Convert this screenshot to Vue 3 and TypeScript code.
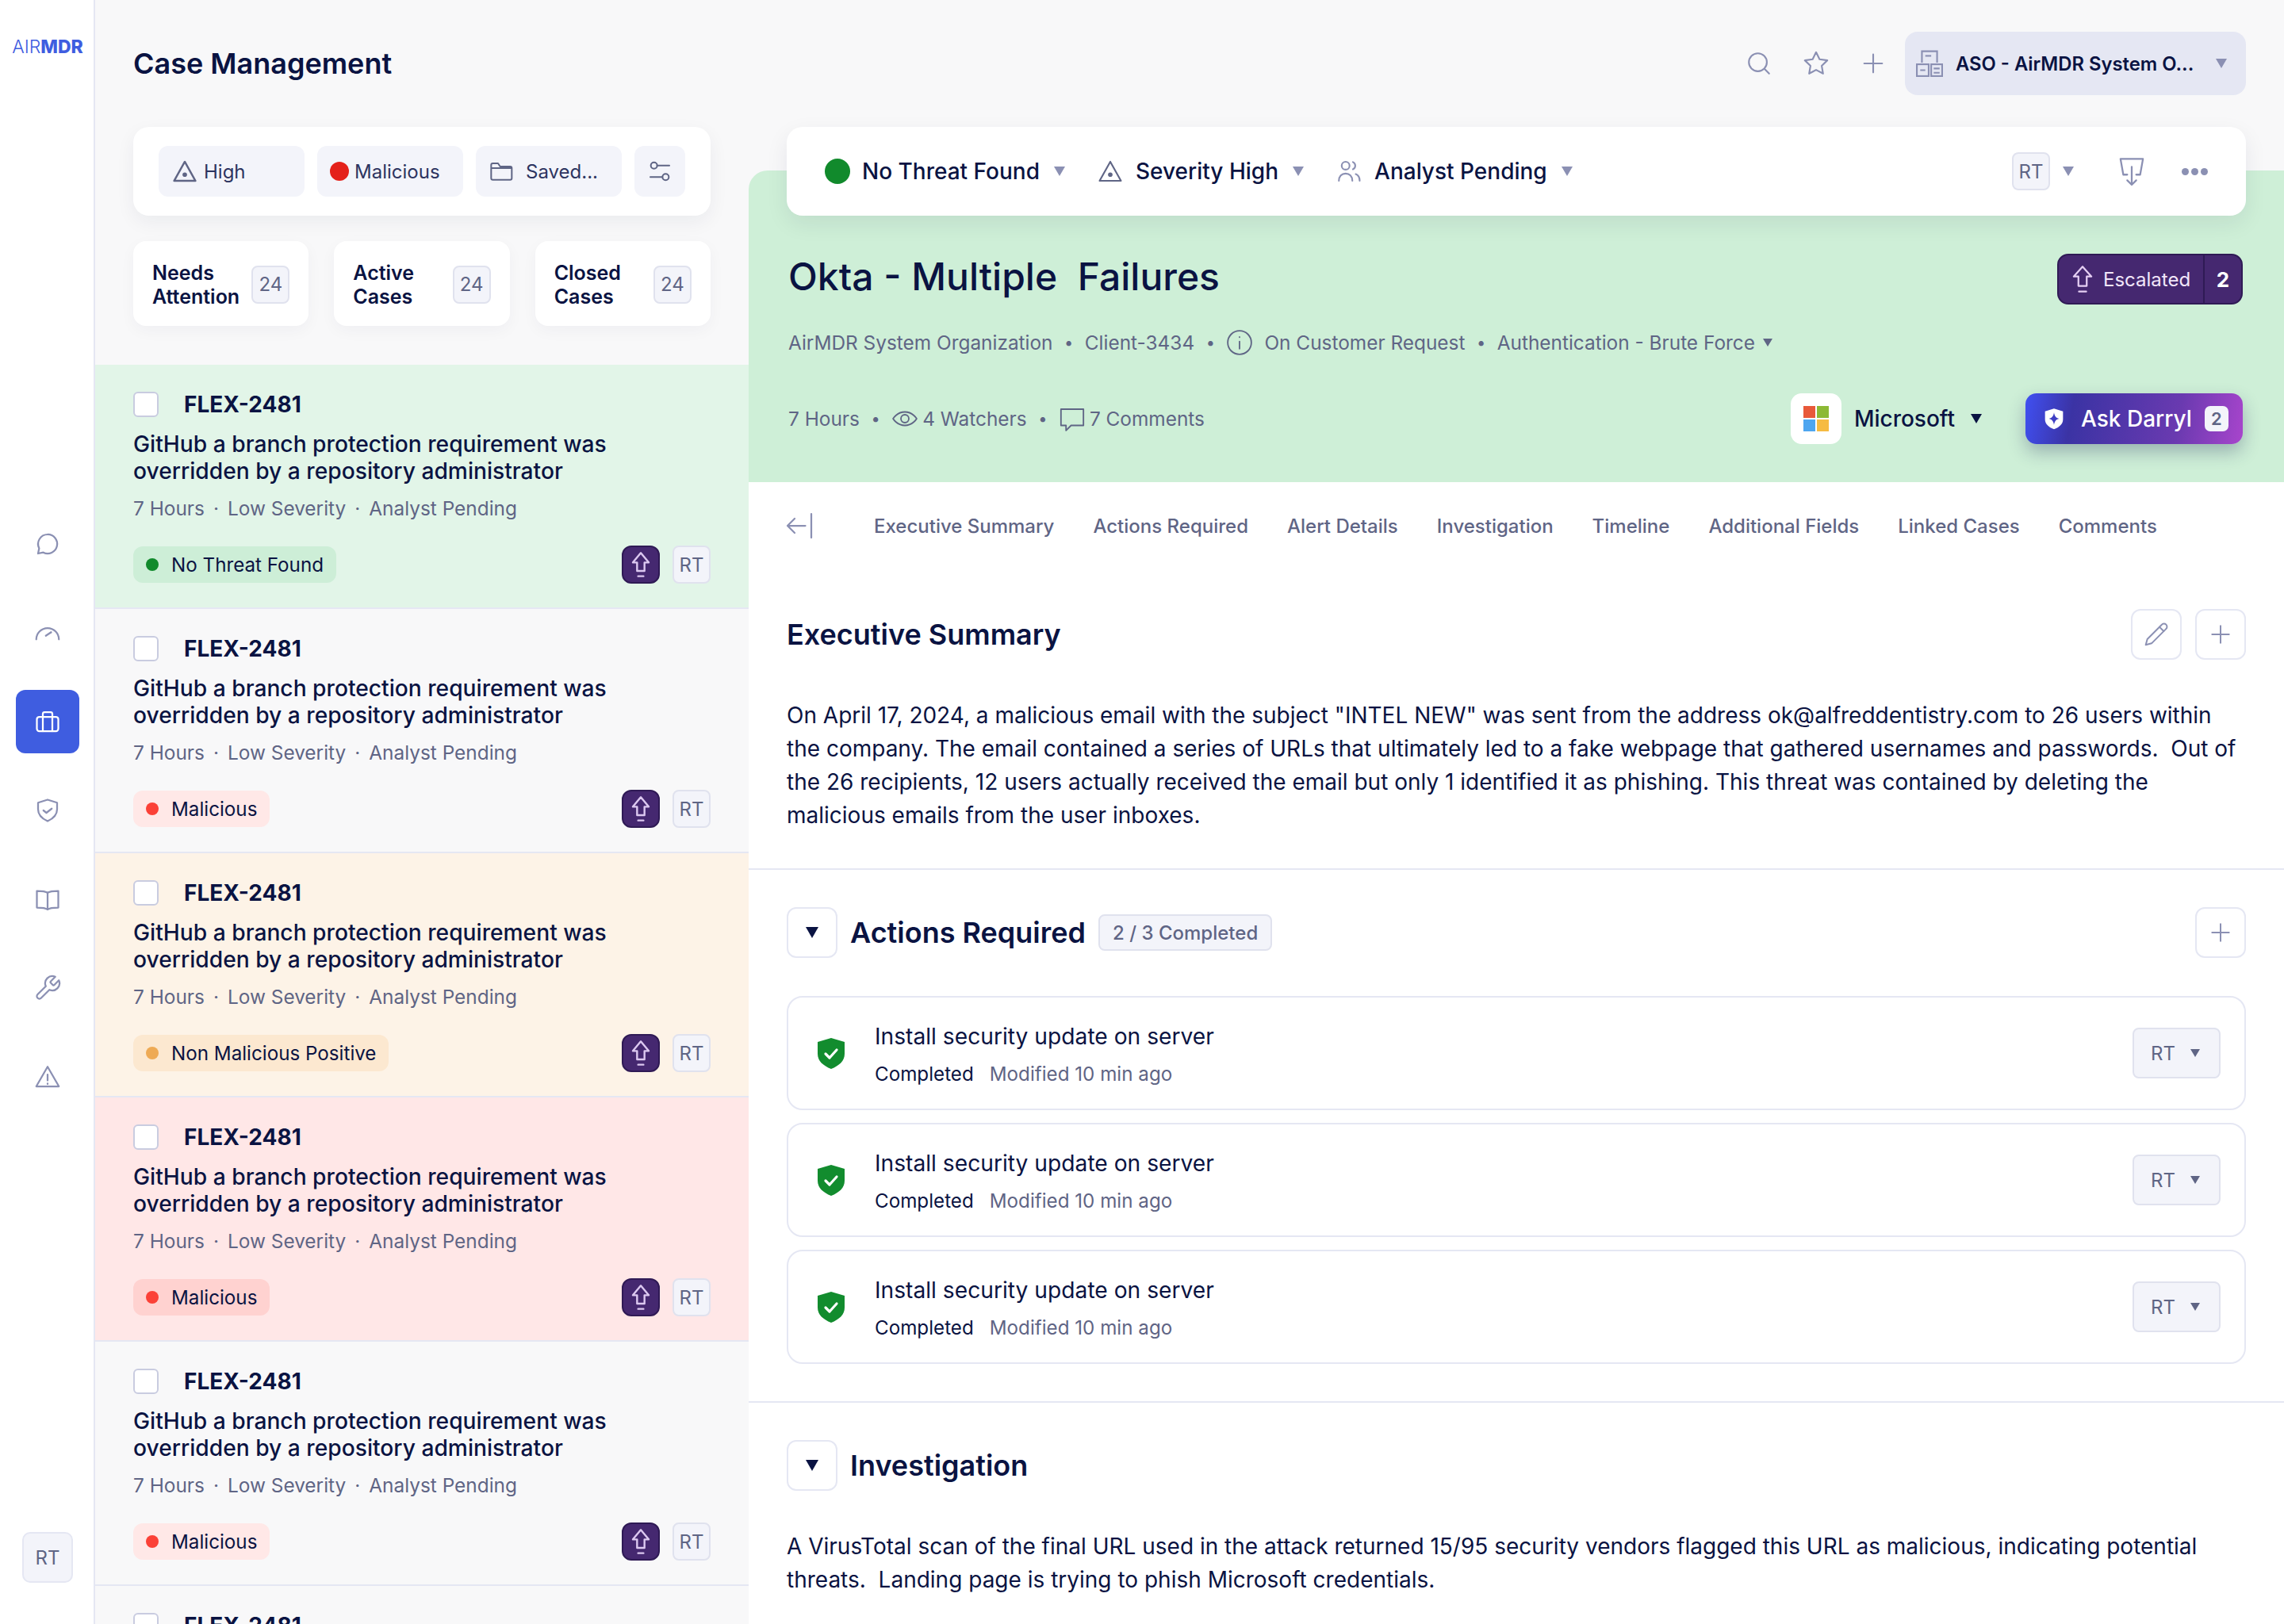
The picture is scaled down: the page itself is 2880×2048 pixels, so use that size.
<script setup lang="ts">
interface CaseRow {
  tint: string
  dot: string
  chipBg: string
  status: string
}

const navItems: string[][] = [
  ['M12 4a8 8 0 1 1-3.600 15.100L4 20l.9-4.400A8 8 0 0 1 12 4z'],
  ['M2.500 17.500a9.500 9.500 0 0 1 19 0', 'M10.500 14.500l4.500-3'],
  ['M5 8h14a2 2 0 0 1 2 2v8a2 2 0 0 1-2 2H5a2 2 0 0 1-2-2v-8a2 2 0 0 1 2-2z', 'M8 8V5.500A1.500 1.500 0 0 1 9.500 4h5A1.500 1.500 0 0 1 16 5.500V8', 'M8 8v12', 'M16 8v12'],
  ['M12 3l8 2.500V11c0 5-3.500 8-8 10-4.500-2-8-5-8-10V5.500z', 'M8.500 12l2.500 2 4.500-3.500'],
  ['M12 6.500C10 5 7 5 3 5v14c4 0 7 0 9 1.500 2-1.500 5-1.500 9-1.500V5c-4 0-7 0-9 1.500z', 'M12 6.500v14'],
  ['M14.700 6.300a1 1 0 0 0 0 1.400l1.600 1.600a1 1 0 0 0 1.400 0l3.770-3.770a6 6 0 0 1-7.940 7.940l-6.910 6.910a2.120 2.120 0 0 1-3-3l6.910-6.910a6 6 0 0 1 7.940-7.940l-3.760 3.760z'],
  ['M12 3.500L2.500 20h19z', 'M12 10v5', 'M12 17.500v.5']
]

const stats = [
  { first: 'Needs', second: 'Attention' },
  { first: 'Active', second: 'Cases' },
  { first: 'Closed', second: 'Cases' }
]

const green = { tint: '#e2f5e8', dot: '#118a2c', chipBg: '#cdeed7', status: 'No Threat Found' }
const plain = { tint: '#f8f8f9', dot: '#fb4137', chipBg: '#ffe8e7', status: 'Malicious' }
const orange = { tint: '#fdf3e7', dot: '#eeaa55', chipBg: '#fce8d0', status: 'Non Malicious Positive' }
const red = { tint: '#ffe7e7', dot: '#fb4137', chipBg: '#ffd2d0', status: 'Malicious' }
const cases: CaseRow[] = [green, plain, orange, red, plain, plain]

const tabs = ['Executive Summary', 'Actions Required', 'Alert Details', 'Investigation', 'Timeline', 'Additional Fields', 'Linked Cases', 'Comments']
const tasks = [1, 2, 3]
</script>

<template>
  <div class="app">
    <aside class="sidebar">
      <div class="logo"><span class="logo-air">AIR</span><span class="logo-mdr">MDR</span></div>
      <nav class="nav">
        <div v-for="(paths, i) in navItems" :key="i" class="nav-item" :class="{ active: i === 2 }">
          <svg width="36" height="36" viewBox="0 0 24 24" fill="none" stroke="currentColor" stroke-width="1.500" stroke-linecap="round" stroke-linejoin="round">
            <path v-for="d in paths" :key="d" :d="d" />
          </svg>
        </div>
      </nav>
      <div class="side-user">RT</div>
    </aside>

    <div class="main">
      <header class="topbar">
        <h1 class="page-title">Case Management</h1>
        <div class="top-actions">
          <div class="top-icons">
            <svg width="34" height="34" viewBox="0 0 24 24" fill="none" stroke="currentColor" stroke-width="1.500" stroke-linecap="round">
              <circle cx="11" cy="11" r="8" /><path d="M17 17l4 4" />
            </svg>
            <svg width="34" height="34" viewBox="0 0 24 24" fill="none" stroke="currentColor" stroke-width="1.500" stroke-linejoin="round">
              <polygon points="12 2 15.090 8.260 22 9.270 17 14.140 18.180 21.020 12 17.770 5.820 21.020 7 14.140 2 9.270 8.910 8.260" />
            </svg>
            <svg width="34" height="34" viewBox="0 0 24 24" fill="none" stroke="currentColor" stroke-width="1.500" stroke-linecap="round">
              <path d="M12 4v16M4 12h16" />
            </svg>
          </div>
          <div class="org-pill">
            <svg width="34" height="34" viewBox="0 0 32 32" fill="none" stroke="#8b90b3" stroke-width="2">
              <path d="M7 15V1.500h18V15" /><path d="M11 7h7" /><rect x="1" y="17" width="14" height="14" /><rect x="18" y="17" width="13" height="14" /><path d="M5 24h6M21 22h7M21 27h7" />
            </svg>
            <span class="org-name">ASO - AirMDR System O...</span>
            <i class="caret caret-muted"></i>
          </div>
        </div>
      </header>

      <div class="content">
        <section class="left">
          <div class="filters">
            <div class="filter-chip">
              <svg width="34" height="34" viewBox="0 0 24 24" fill="none" stroke="#5f6585" stroke-width="1.700" stroke-linejoin="round">
                <path d="M12 3.500 2.500 20.500h19z" /><circle cx="12" cy="15" r="2" fill="#5f6585" stroke="none" />
              </svg>
              <span>High</span>
            </div>
            <div class="filter-chip">
              <i class="filter-dot"></i>
              <span>Malicious</span>
            </div>
            <div class="filter-chip saved">
              <svg width="32" height="32" viewBox="0 0 24 24" fill="none" stroke="#5f6585" stroke-width="1.500" stroke-linejoin="round">
                <path d="M2.500 6A1.500 1.500 0 0 1 4 4.500h5l2 3h9.500A1.500 1.500 0 0 1 22 9v9.500a1.500 1.500 0 0 1-1.500 1.500H4a1.500 1.500 0 0 1-1.500-1.500z" /><path d="M2.500 9H22" />
              </svg>
              <span>Saved...</span>
            </div>
            <div class="filter-btn">
              <svg width="32" height="32" viewBox="0 0 24 24" fill="none" stroke="#5f6585" stroke-width="1.500" stroke-linecap="round">
                <circle cx="6.500" cy="6.500" r="3" /><path d="M9.500 6.500H21" /><circle cx="17.500" cy="17.500" r="3" /><path d="M3 17.500h11.500" />
              </svg>
            </div>
          </div>

          <div class="stats">
            <div v-for="s in stats" :key="s.first" class="stat-card">
              <div class="stat-label">{{ s.first }}<br />{{ s.second }}</div>
              <div class="stat-count">24</div>
            </div>
          </div>

          <div class="case-list">
            <article v-for="(c, i) in cases" :key="i" class="case-row" :style="{ background: c.tint }">
              <div class="case-head">
                <span class="checkbox"></span>
                <span class="case-id">FLEX-2481</span>
              </div>
              <template v-if="i < 5">
                <p class="case-title">GitHub a branch protection requirement was overridden by a repository administrator</p>
                <div class="case-meta">7 Hours<em>·</em>Low Severity<em>·</em>Analyst Pending</div>
                <div class="case-foot">
                  <div class="status-chip" :style="{ background: c.chipBg }">
                    <i class="status-dot" :style="{ background: c.dot }"></i>
                    <span>{{ c.status }}</span>
                  </div>
                  <div class="foot-badges">
                    <div class="esc-badge">
                      <svg width="32" height="36" viewBox="0 0 24 27" fill="none" stroke="#dcc8f0" stroke-width="1.800" stroke-linejoin="round" stroke-linecap="round">
                        <path d="M12 2.500 4.500 11.500H8.500V19.500H15.500V11.500H19.500Z" /><path d="M9.500 24.500h5" />
                      </svg>
                    </div>
                    <div class="rt-badge">RT</div>
                  </div>
                </div>
              </template>
            </article>
          </div>
        </section>

        <section class="right">
          <div class="hero">
            <div class="toolbar">
              <div class="tool-group">
                <i class="tool-dot"></i>
                <span class="tool-text">No Threat Found</span>
                <i class="caret caret-muted"></i>
              </div>
              <div class="tool-group">
                <svg width="34" height="34" viewBox="0 0 24 24" fill="none" stroke="#5f6585" stroke-width="1.500" stroke-linejoin="round">
                  <path d="M12 3.500 2.500 20.500h19z" /><circle cx="12" cy="15" r="2" fill="#5f6585" stroke="none" />
                </svg>
                <span class="tool-text">Severity High</span>
                <i class="caret caret-muted"></i>
              </div>
              <div class="tool-group">
                <svg width="34" height="34" viewBox="0 0 24 24" fill="none" stroke="#8b90b3" stroke-width="1.500" stroke-linecap="round">
                  <circle cx="9" cy="7" r="3.500" /><path d="M3 20.500c0-4 2.500-6.500 6-6.500s6 2.500 6 6.500" /><path d="M15.500 3.800a3.500 3.500 0 0 1 0 6.400" /><path d="M18 14.500c2 .8 3.500 3 3.500 6" />
                </svg>
                <span class="tool-text">Analyst Pending</span>
                <i class="caret caret-muted"></i>
              </div>
              <div class="tool-right">
                <div class="rt-badge tall">RT</div>
                <i class="caret caret-muted"></i>
                <svg class="tray" width="34" height="40" viewBox="0 0 24 28" fill="none" stroke="#8b90b3" stroke-width="1.600" stroke-linecap="round" stroke-linejoin="round">
                  <path d="M8 17H4.500L2 3h20l-2.500 14H16" /><path d="M12 10v16M8 22l4 4 4-4" />
                </svg>
                <div class="more"><i></i><i></i><i></i></div>
              </div>
            </div>

            <div class="hero-title-row">
              <h2 class="case-name">Okta - Multiple&nbsp; Failures</h2>
              <div class="esc-pill">
                <div class="esc-label">
                  <svg width="32" height="38" viewBox="0 0 24 29" fill="none" stroke="#e5cff3" stroke-width="1.700" stroke-linejoin="round" stroke-linecap="round">
                    <path d="M12 2.500 3.500 12H8V21H16V12H20.500Z" /><path d="M8.500 26.500h7" />
                  </svg>
                  <span>Escalated</span>
                </div>
                <div class="esc-num">2</div>
              </div>
            </div>

            <div class="hero-meta">
              <span>AirMDR System Organization</span><em>•</em>
              <span>Client-3434</span><em>•</em>
              <svg width="34" height="34" viewBox="0 0 24 24" fill="none" stroke="#5f6585" stroke-width="1.300" stroke-linecap="round">
                <circle cx="12" cy="12" r="10.500" /><path d="M12 11v6.500M12 7v.3" />
              </svg>
              <span class="gap-left">On Customer Request</span><em>•</em>
              <span>Authentication - Brute Force</span>
              <i class="caret caret-small"></i>
            </div>

            <div class="hero-bottom">
              <div class="hero-meta">
                <span>7 Hours</span><em>•</em>
                <svg width="34" height="34" viewBox="0 0 24 24" fill="none" stroke="#5f6585" stroke-width="1.300" stroke-linejoin="round">
                  <path d="M1.500 12S5 6 12 6s10.500 6 10.500 6S19 18 12 18 1.500 12 1.500 12z" /><circle cx="12" cy="12" r="3.500" />
                </svg>
                <span class="tight">4 Watchers</span><em>•</em>
                <svg width="34" height="34" viewBox="0 0 24 24" fill="none" stroke="#5f6585" stroke-width="1.300" stroke-linejoin="round">
                  <path d="M2 3.500h20v14.500H11l-4.500 4.500V18H2z" />
                </svg>
                <span class="tight">7 Comments</span>
              </div>
              <div class="hero-actions">
                <div class="vendor">
                  <div class="vendor-tile">
                    <div class="ms-logo"><i></i><i></i><i></i><i></i></div>
                  </div>
                  <span class="vendor-name">Microsoft</span>
                  <i class="caret caret-dark"></i>
                </div>
                <div class="ask-btn">
                  <svg width="24" height="28" viewBox="0 0 18 20">
                    <path d="M9 .5 17.500 3v7.500c0 4.500-3.500 7.500-8.500 9.500C4 18 .5 15 .5 10.500V3z" fill="#fff" />
                    <path d="M9 4c.5 3.500 1.700 5.100 4.800 6-3.100.9-4.300 2.500-4.800 6-.5-3.500-1.700-5.100-4.800-6 3.100-.9 4.300-2.500 4.800-6z" fill="#3f3fc4" />
                  </svg>
                  <span>Ask Darryl</span>
                  <div class="ask-count">2</div>
                </div>
              </div>
            </div>
          </div>

          <div class="tabs">
            <svg class="back" width="36" height="36" viewBox="0 0 24 24" fill="none" stroke="#8b90b3" stroke-width="1.500" stroke-linecap="round" stroke-linejoin="round">
              <path d="M22 2v20" /><path d="M2 12h15M8 6l-6 6 6 6" />
            </svg>
            <span v-for="t in tabs" :key="t" class="tab">{{ t }}</span>
          </div>

          <div class="section summary">
            <div class="section-head">
              <h3 class="section-title">Executive Summary</h3>
              <div class="head-btns">
                <div class="square-btn">
                  <svg width="32" height="32" viewBox="0 0 24 24" fill="none" stroke="#8b90b3" stroke-width="1.500" stroke-linecap="round" stroke-linejoin="round">
                    <path d="M17 3a2.850 2.850 0 1 1 4 4L7.500 20.500 2 22l1.500-5.500z" /><path d="M15 5l4 4" />
                  </svg>
                </div>
                <div class="square-btn">
                  <svg width="32" height="32" viewBox="0 0 24 24" fill="none" stroke="#8b90b3" stroke-width="1.500" stroke-linecap="round"><path d="M12 4v16M4 12h16" /></svg>
                </div>
              </div>
            </div>
            <p class="body-text">On April 17, 2024, a malicious email with the subject "INTEL NEW" was sent from the address ok@alfreddentistry.com to 26 users within the company. The email contained a series of URLs that ultimately led to a fake webpage that gathered usernames and passwords.&nbsp; Out of the 26 recipients, 12 users actually received the email but only 1 identified it as phishing. This threat was contained by deleting the malicious emails from the user inboxes.</p>
          </div>

          <div class="section actions">
            <div class="section-head">
              <div class="head-left">
                <div class="square-btn"><i class="caret caret-dark big"></i></div>
                <h3 class="section-title">Actions Required</h3>
                <span class="progress">2 / 3 Completed</span>
              </div>
              <div class="square-btn">
                <svg width="32" height="32" viewBox="0 0 24 24" fill="none" stroke="#8b90b3" stroke-width="1.500" stroke-linecap="round"><path d="M12 4v16M4 12h16" /></svg>
              </div>
            </div>
            <div class="task-list">
              <div v-for="t in tasks" :key="t" class="task-card">
                <svg class="task-shield" width="36" height="40" viewBox="0 0 18 20">
                  <path d="M9 .5 17.500 3v7.500c0 4.500-3.500 7.500-8.500 9.500C4 18 .5 15 .5 10.500V3z" fill="#128c2e" />
                  <path d="M5.500 10.500l2.500 2.500 4.500-5" fill="none" stroke="#fff" stroke-width="1.600" stroke-linecap="round" stroke-linejoin="round" />
                </svg>
                <div class="task-body">
                  <div class="task-title">Install security update on server</div>
                  <div class="task-sub"><b>Completed</b><span>Modified 10 min ago</span></div>
                </div>
                <div class="assignee">
                  <span>RT</span>
                  <i class="caret caret-muted-dark"></i>
                </div>
              </div>
            </div>
          </div>

          <div class="section investigation">
            <div class="section-head">
              <div class="head-left">
                <div class="square-btn"><i class="caret caret-dark big"></i></div>
                <h3 class="section-title">Investigation</h3>
              </div>
            </div>
            <p class="body-text">A VirusTotal scan of the final URL used in the attack returned 15/95 security vendors flagged this URL as malicious, indicating potential threats.&nbsp; Landing page is trying to phish Microsoft credentials.</p>
          </div>
        </section>
      </div>
    </div>
  </div>
</template>

<style scoped>
.app {
  display: flex;
  width: 2880px;
  height: 2048px;
  overflow: hidden;
  background: #f8f8f9;
  font-family: Inter, "Liberation Sans", sans-serif;
  color: #0a1342;
}

.sidebar {
  width: 120px;
  flex-shrink: 0;
  box-sizing: border-box;
  padding-left: 2px;
  background: #fff;
  border-right: 2px solid #e5e7f3;
  display: flex;
  flex-direction: column;
  align-items: center;
}

.logo {
  margin-top: 46px;
  font-size: 23px;
  line-height: 26px;
  color: #3f5de0;
  white-space: nowrap;
}

.logo-air {
  font-weight: 300;
}

.logo-mdr {
  font-weight: 800;
}

.nav {
  margin-top: 574px;
  display: flex;
  flex-direction: column;
  gap: 32px;
}

.nav-item {
  width: 80px;
  height: 80px;
  border-radius: 12px;
  display: flex;
  align-items: center;
  justify-content: center;
  color: #8b90b3;
}

.nav-item.active {
  background: #3f5de0;
  color: #fff;
}

.side-user {
  margin-top: auto;
  margin-bottom: 52px;
  width: 64px;
  height: 64px;
  box-sizing: border-box;
  border: 2px solid #e5e7f3;
  border-radius: 10px;
  background: #f3f4fa;
  color: #5f6585;
  font-size: 24px;
  display: flex;
  align-items: center;
  justify-content: center;
}

.main {
  flex: 1;
  min-width: 0;
  display: flex;
  flex-direction: column;
}

.topbar {
  height: 160px;
  flex-shrink: 0;
  box-sizing: border-box;
  padding: 0 48px;
  display: flex;
  align-items: center;
  justify-content: space-between;
}

.page-title {
  margin: 0;
  font-size: 36px;
  font-weight: 600;
  line-height: 44px;
}

.top-actions {
  display: flex;
  align-items: center;
  gap: 23px;
}

.top-icons {
  display: flex;
  align-items: center;
  gap: 38px;
  color: #8b90b3;
}

.org-pill {
  width: 430px;
  height: 80px;
  box-sizing: border-box;
  padding: 0 24px 0 14px;
  background: #e5e7f3;
  border-radius: 16px;
  display: flex;
  align-items: center;
  gap: 16px;
}

.org-name {
  flex: 1;
  font-size: 23.800px;
  font-weight: 600;
  white-space: nowrap;
}

.caret {
  display: inline-block;
  width: 0;
  height: 0;
  border-left: 7px solid transparent;
  border-right: 7px solid transparent;
  border-top: 12px solid #8b90b3;
  flex-shrink: 0;
}

.caret-muted-dark {
  border-top-color: #5f6585;
  border-left-width: 6px;
  border-right-width: 6px;
  border-top-width: 10px;
}

.caret-small {
  border-top-color: #5f6585;
  border-left-width: 6px;
  border-right-width: 6px;
  border-top-width: 10px;
  margin-left: 10px;
}

.caret-dark {
  border-top-color: #0a1342;
}

.caret-dark.big {
  border-left-width: 8px;
  border-right-width: 8px;
  border-top-width: 14px;
}

.content {
  flex: 1;
  min-height: 0;
  display: flex;
}

.left {
  width: 824px;
  flex-shrink: 0;
  display: flex;
  flex-direction: column;
  min-height: 0;
}

.filters {
  margin: 0 48px;
  height: 112px;
  box-sizing: border-box;
  padding: 24px 32px;
  background: #fff;
  border-radius: 20px;
  box-shadow: 0 8px 24px rgba(20, 26, 70, 0.06);
  display: flex;
  gap: 16px;
}

.filter-chip {
  width: 184px;
  height: 64px;
  box-sizing: border-box;
  padding-left: 16px;
  background: #f3f4fa;
  border-radius: 12px;
  display: flex;
  align-items: center;
  gap: 7px;
  font-size: 24px;
  color: #2d3460;
}

.filter-chip.saved {
  gap: 15px;
}

.filter-dot {
  width: 24px;
  height: 24px;
  border-radius: 50%;
  background: #e4211a;
}

.filter-btn {
  width: 64px;
  height: 64px;
  background: #f3f4fa;
  border-radius: 12px;
  display: flex;
  align-items: center;
  justify-content: center;
}

.stats {
  margin: 32px 48px 49px;
  display: grid;
  grid-template-columns: repeat(3, 1fr);
  gap: 32px;
}

.stat-card {
  height: 107px;
  box-sizing: border-box;
  padding: 2px 24px 0;
  background: #fff;
  border-radius: 16px;
  box-shadow: 0 6px 20px rgba(20, 26, 70, 0.04);
  display: flex;
  align-items: center;
  justify-content: space-between;
}

.stat-label {
  font-size: 25px;
  line-height: 30px;
  font-weight: 600;
}

.stat-count,
.rt-badge {
  width: 48px;
  height: 48px;
  box-sizing: border-box;
  border: 2px solid #e0e2ee;
  border-radius: 8px;
  background: #f3f4fa;
  color: #5f6585;
  font-size: 24px;
  display: flex;
  align-items: center;
  justify-content: center;
}

.case-list {
  flex: 1;
  min-height: 0;
  overflow: hidden;
}

.case-row {
  box-sizing: border-box;
  height: 308px;
  padding: 33px 48px 0;
  border-bottom: 2px solid #e5e7f3;
}

.case-head {
  height: 34px;
  display: flex;
  align-items: center;
  gap: 32px;
}

.checkbox {
  width: 32px;
  height: 32px;
  box-sizing: border-box;
  background: #fff;
  border: 2px solid #c9cce0;
  border-radius: 6px;
}

.case-id {
  font-size: 28px;
  font-weight: 700;
  line-height: 34px;
}

.case-title {
  margin: 16px 0 0;
  font-size: 28.200px;
  line-height: 34px;
  font-weight: 500;
  width: 640px;
}

.case-meta {
  margin-top: 16px;
  font-size: 24.400px;
  line-height: 28px;
  color: #5f6585;
}

.case-meta em {
  font-style: normal;
  margin: 0 11px;
}

.case-foot {
  margin-top: 33px;
  display: flex;
  align-items: center;
  justify-content: space-between;
}

.status-chip {
  height: 46px;
  box-sizing: border-box;
  padding: 0 16px;
  border-radius: 12px;
  display: flex;
  align-items: center;
  gap: 16px;
  font-size: 24.200px;
}

.status-dot {
  width: 16px;
  height: 16px;
  border-radius: 50%;
}

.foot-badges {
  display: flex;
  gap: 16px;
}

.esc-badge {
  width: 48px;
  height: 48px;
  box-sizing: border-box;
  background: #452870;
  border: 2px solid #2f1a55;
  border-radius: 12px;
  display: flex;
  align-items: center;
  justify-content: center;
}

.right {
  flex: 1;
  min-width: 0;
  padding-top: 55px;
  display: flex;
  flex-direction: column;
}

.hero {
  background: #ceefd7;
  border-top-left-radius: 24px;
  padding: 0 48px 48px;
  flex-shrink: 0;
}

.toolbar {
  margin-top: -55px;
  height: 112px;
  box-sizing: border-box;
  padding: 0 48px;
  background: #fff;
  border-radius: 20px;
  box-shadow: 0 10px 28px rgba(20, 26, 70, 0.08);
  display: flex;
  align-items: center;
  gap: 40px;
}

.tool-group {
  display: flex;
  align-items: center;
  gap: 15px;
}

.tool-group .caret {
  margin-left: 3px;
}

.tool-dot {
  width: 32px;
  height: 32px;
  border-radius: 50%;
  background: #118a2c;
}

.tool-text {
  font-size: 28px;
  font-weight: 500;
}

.tool-right {
  margin-left: auto;
  display: flex;
  align-items: center;
  gap: 16px;
}

.tray {
  margin-left: 40px;
}

.more {
  margin-left: 30px;
  display: flex;
  gap: 3px;
}

.more i {
  width: 9px;
  height: 9px;
  border-radius: 50%;
  background: #8b90b3;
}

.hero-title-row {
  margin-top: 48px;
  padding: 0 4px 0 2px;
  height: 64px;
  display: flex;
  align-items: center;
  justify-content: space-between;
}

.case-name {
  margin: -6px 0 0;
  font-size: 48px;
  font-weight: 500;
  line-height: 58px;
}

.esc-pill {
  height: 64px;
  width: 234px;
  box-sizing: border-box;
  background: #452870;
  border: 2px solid #2f1a55;
  border-radius: 14px;
  display: flex;
  color: #f1e6f9;
  font-size: 24px;
}

.esc-label {
  width: 184px;
  box-sizing: border-box;
  padding-left: 14px;
  display: flex;
  align-items: center;
  gap: 10px;
  border-right: 2px solid #2f1a55;
}

.esc-num {
  flex: 1;
  display: flex;
  align-items: center;
  justify-content: center;
  color: #fff;
  font-weight: 700;
  font-size: 26px;
}

.hero-meta {
  margin-top: 32px;
  padding-left: 2px;
  height: 32px;
  display: flex;
  align-items: center;
  font-size: 24.400px;
  color: #5f6585;
  white-space: nowrap;
}

.hero-meta em {
  font-style: normal;
  margin: 0 14.500px;
  font-size: 20px;
}

.gap-left {
  margin-left: 14px;
}

.tight {
  margin-left: 5px;
}

.hero-bottom {
  margin-top: 48px;
  height: 64px;
  padding-right: 4px;
  display: flex;
  align-items: center;
  justify-content: space-between;
}

.hero-bottom .hero-meta {
  margin-top: 0;
}

.hero-actions {
  display: flex;
  align-items: center;
  gap: 55px;
}

.vendor {
  display: flex;
  align-items: center;
  gap: 16px;
}

.vendor-tile {
  width: 64px;
  height: 64px;
  background: #fff;
  border-radius: 14px;
  display: flex;
  align-items: center;
  justify-content: center;
}

.ms-logo {
  display: grid;
  grid-template-columns: repeat(2, 15px);
  grid-template-rows: repeat(2, 15px);
  gap: 2px;
}

.ms-logo i:nth-child(1) {
  background: #e8593a;
}

.ms-logo i:nth-child(2) {
  background: #8cb935;
}

.ms-logo i:nth-child(3) {
  background: #4ea6f0;
}

.ms-logo i:nth-child(4) {
  background: #f6bb42;
}

.vendor-name {
  font-size: 28px;
  font-weight: 500;
  margin-right: 4px;
}

.ask-btn {
  width: 274px;
  height: 64px;
  box-sizing: border-box;
  padding-left: 24px;
  border-radius: 14px;
  background: linear-gradient(100deg, #4050f2 0%, #3b33a4 22%, #6a3ab0 70%, #a845cc 100%);
  box-shadow: 0 10px 22px rgba(30, 40, 90, 0.3);
  color: #fff;
  font-size: 28px;
  font-weight: 500;
  display: flex;
  align-items: center;
  gap: 22px;
}

.ask-count {
  width: 30px;
  height: 32px;
  margin-left: -6px;
  background: #f3f4fa;
  border-radius: 7px;
  color: #5f6585;
  font-size: 22px;
  font-weight: 600;
  display: flex;
  align-items: center;
  justify-content: center;
}

.right > .tabs,
.section {
  background: #fff;
}

.tabs {
  height: 110px;
  flex-shrink: 0;
  box-sizing: border-box;
  padding: 0 48px;
  display: flex;
  align-items: center;
  gap: 49px;
}

.back {
  margin: 0 27px 0 -2px;
}

.tab {
  font-size: 24px;
  font-weight: 500;
  color: #5f6585;
  white-space: nowrap;
}

.section {
  flex-shrink: 0;
  padding: 47px 48px;
  border-bottom: 2px solid #e5e7f3;
}

.summary {
  padding-top: 50px;
  padding-bottom: 46px;
}

.investigation {
  flex: 1;
  border-bottom: none;
}

.section-head {
  height: 64px;
  display: flex;
  align-items: center;
  justify-content: space-between;
}

.head-left {
  display: flex;
  align-items: center;
  gap: 16px;
}

.head-btns {
  display: flex;
  gap: 17px;
}

.section-title {
  margin: 0;
  font-size: 36px;
  font-weight: 600;
  line-height: 44px;
}

.square-btn {
  width: 64px;
  height: 64px;
  box-sizing: border-box;
  background: #fff;
  border: 2px solid #e5e7f3;
  border-radius: 12px;
  display: flex;
  align-items: center;
  justify-content: center;
}

.progress {
  height: 46px;
  box-sizing: border-box;
  padding: 0 16px;
  background: #f3f4fa;
  border: 2px solid #e0e2ee;
  border-radius: 8px;
  color: #5f6585;
  font-size: 24px;
  font-weight: 500;
  display: flex;
  align-items: center;
}

.body-text {
  margin: 49px 0 0;
  font-size: 28px;
  line-height: 42px;
}

.task-list {
  margin-top: 48px;
  display: flex;
  flex-direction: column;
  gap: 16px;
}

.task-card {
  height: 144px;
  box-sizing: border-box;
  padding: 0 30px 0 36px;
  border: 2px solid #e5e7f3;
  border-radius: 20px;
  display: flex;
  align-items: center;
}

.task-body {
  flex: 1;
  margin-left: 37px;
  padding-top: 4px;
  display: flex;
  flex-direction: column;
  gap: 14px;
}

.task-title {
  font-size: 28.200px;
  line-height: 36px;
}

.task-sub {
  font-size: 24.200px;
  line-height: 32px;
  display: flex;
  gap: 20px;
}

.task-sub b {
  font-weight: 400;
}

.task-sub span {
  color: #5f6585;
}

.assignee {
  width: 111px;
  height: 64px;
  box-sizing: border-box;
  padding: 0 24px 0 21px;
  background: #f3f4fa;
  border: 2px solid #e0e2ee;
  border-radius: 8px;
  color: #5f6585;
  font-size: 24px;
  display: flex;
  align-items: center;
  justify-content: space-between;
}
</style>

<style>
body {
  margin: 0;
}
</style>
